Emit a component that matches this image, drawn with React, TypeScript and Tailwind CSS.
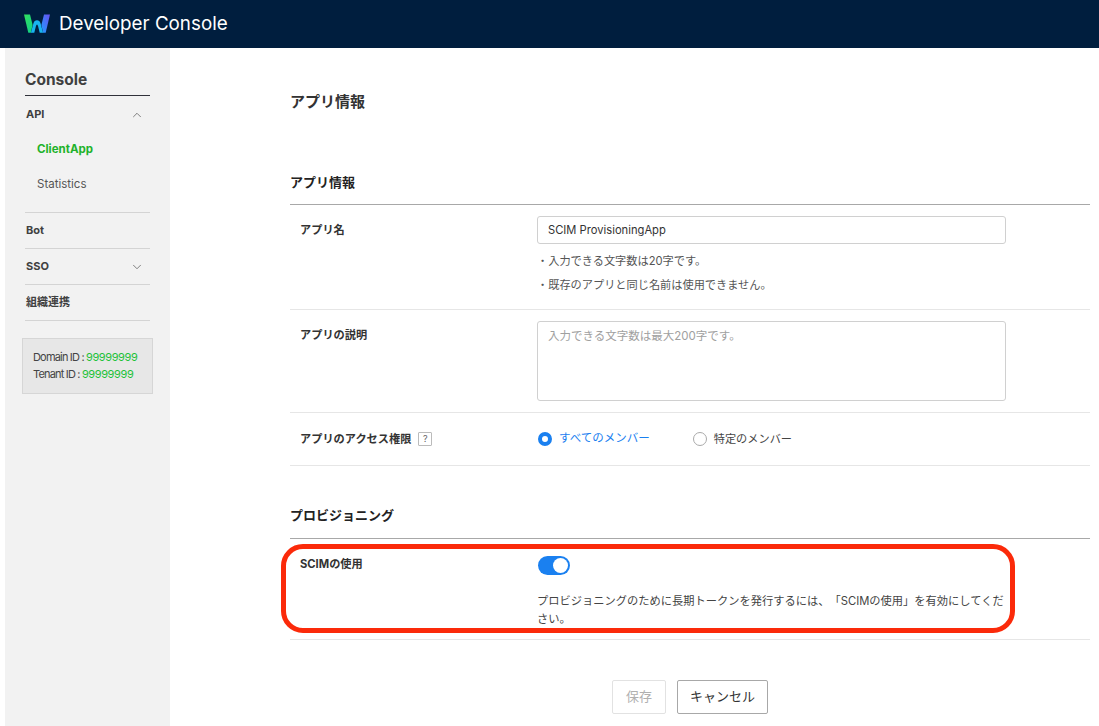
import { ChevronDown, ChevronUp } from 'lucide-react';

const fontStack = "font-['Inter','Noto_Sans_CJK_JP',sans-serif]";

function Logo() {
  return (
    <svg width="26" height="20" viewBox="0 0 26 20" aria-hidden="true">
      <defs>
        <linearGradient id="wLeft" x1="0" y1="0" x2="1" y2="1">
          <stop offset="0" stopColor="#34e05c" />
          <stop offset="1" stopColor="#0fcf8a" />
        </linearGradient>
        <linearGradient id="wRight" x1="0" y1="1" x2="1" y2="0">
          <stop offset="0" stopColor="#1e9cff" />
          <stop offset="1" stopColor="#6a4ff0" />
        </linearGradient>
      </defs>
      <path d="M0 .5h6l2.6 10.5-1.7 7.8H4.3z" fill="url(#wLeft)" />
      <path d="M6.9 18.8 9.4 9.5Q10.4 6.2 13 6.2t3.6 3.3l2.5 9.3h-3.4l-1.6-6.6Q13.6 10.6 13 10.6t-1.1 1.6l-1.6 6.6z" fill="#18b4f0" />
      <path d="M19.1 18.8h2.6L26 .5h-6l-2.6 10.5z" fill="url(#wRight)" />
    </svg>
  );
}

function NavRow({ label, open }: { label: string; open?: boolean }) {
  return (
    <div className="flex h-[35px] items-center justify-between pl-px pr-[6px] text-[11px] font-bold text-[#404040]">
      <span>{label}</span>
      {open === true && <ChevronUp className="size-3.5 text-[#555]" strokeWidth={1.25} />}
      {open === false && <ChevronDown className="size-3.5 text-[#555]" strokeWidth={1.25} />}
    </div>
  );
}

function Sidebar() {
  return (
    <aside className="ml-[5px] w-[165px] shrink-0 bg-[#f2f2f2] pt-[19px]">
      <div className="mx-5 w-[125px]">
        <div className="h-[29px] border-b border-[#30323a] text-[15.5px] leading-[26px] font-bold text-[#404040]">Console</div>
        <div className="pt-px">
          <NavRow label="API" open />
        </div>
        <div className="mt-px flex h-[34px] items-center pl-3 text-[11.5px] font-bold text-[#1fb22b]">ClientApp</div>
        <div className="flex h-9 items-center pl-3 text-[11.5px] text-[#555]">Statistics</div>
        <div className="mt-[9px] border-t border-[#d4d4d4]">
          <NavRow label="Bot" />
        </div>
        <div className="border-t border-[#d4d4d4]">
          <NavRow label="SSO" open={false} />
        </div>
        <div className="border-t border-[#d4d4d4]">
          <NavRow label="組織連携" />
        </div>
        <div className="border-t border-[#d4d4d4]" />
      </div>
      <div className="mt-[17px] ml-[17px] h-[56px] w-[131px] border border-[#d6d6d6] bg-[#e7e7e7] px-[10px] py-[10px] text-[11px] leading-[17px] tracking-[-0.82px] whitespace-nowrap text-[#444]">
        <div>
          Domain ID : <span className="tracking-[-0.4px] text-[#1fc23a]">99999999</span>
        </div>
        <div>
          Tenant ID : <span className="tracking-[-0.4px] text-[#1fc23a]">99999999</span>
        </div>
      </div>
    </aside>
  );
}

function Label({ children }: { children: React.ReactNode }) {
  return <div className="w-[247px] shrink-0 pl-[10px] text-[11.2px] font-bold text-[#333]">{children}</div>;
}

function Radio({ checked, label }: { checked?: boolean; label: string }) {
  return (
    <label className="flex items-center gap-[7px]">
      {checked ? (
        <span className="size-[14px] rounded-full border-[4px] border-[#1a80f0] bg-white" />
      ) : (
        <span className="size-[14px] rounded-full border border-[#aaa] bg-white" />
      )}
      <span className={checked ? 'text-[11.5px] text-[#1a80f0]' : 'text-[11.2px] text-[#444]'}>{label}</span>
    </label>
  );
}

function Main() {
  return (
    <main className="ml-[120px] w-[800px] shrink-0">
      <h1 className="pt-[44px] text-[15px] leading-[20px] font-bold text-[#333]">アプリ情報</h1>

      <h2 className="mt-[60px] h-[33px] border-b border-[#a8a8a8] text-[13px] leading-[20px] font-bold text-[#222]">アプリ情報</h2>
      <div className="flex h-[105px] border-b border-[#e6e6e6] pt-[11px]">
        <div className="pt-[6px]">
          <Label>アプリ名</Label>
        </div>
        <div>
          <div className="flex h-7 w-[469px] items-center rounded-[3px] border border-[#d0d0d0] px-[10px] text-[11.2px] text-[#333]">
            SCIM ProvisioningApp
          </div>
          <p className="mt-[9px] text-[11.2px] leading-[16px] text-[#555]">・入力できる文字数は20字です。</p>
          <p className="mt-2 text-[11.2px] leading-[16px] text-[#555]">・既存のアプリと同じ名前は使用できません。</p>
        </div>
      </div>
      <div className="flex h-[103px] border-b border-[#e6e6e6] pt-[11px]">
        <div className="pt-[6px]">
          <Label>アプリの説明</Label>
        </div>
        <div className="h-[80px] w-[469px] rounded-[3px] border border-[#d0d0d0] px-[10px] py-[6px] text-[11.5px] leading-[16px] text-[#a0a0a0]">
          入力できる文字数は最大200字です。
        </div>
      </div>
      <div className="flex h-[53px] items-center border-b border-[#e6e6e6]">
        <Label>
          <span className="flex items-center gap-[7px]">
            アプリのアクセス権限
            <span className="flex size-[14px] items-center justify-center rounded-[1px] border border-[#bbb] text-[9px] font-normal text-[#666]">?</span>
          </span>
        </Label>
        <div className="ml-px flex gap-[43px]">
          <Radio checked label="すべてのメンバー" />
          <Radio label="特定のメンバー" />
        </div>
      </div>

      <h2 className="mt-[40px] h-[33px] border-b border-[#a8a8a8] text-[13px] leading-[18px] font-bold text-[#222]">プロビジョニング</h2>
      <div className="flex h-[101px] border-b border-[#e6e6e6] pt-[17px]">
        <Label>SCIMの使用</Label>
        <div className="w-[469px]">
          <div className="ml-px flex h-[19px] w-8 items-center justify-end rounded-full bg-[#1a80f0] pr-[2px]">
            <span className="size-[15px] rounded-full bg-white" />
          </div>
          <p className="mt-[17px] text-[11.25px] leading-[18px] text-[#444] [text-spacing-trim:space-all]">
            プロビジョニングのために長期トークンを発行するには、「SCIMの使用」を有効にしてください。
          </p>
        </div>
      </div>

      <div className="mt-10 flex justify-center gap-[11px]">
        <button className="h-[34px] w-[54px] rounded-[2px] border border-[#e2e2e2] text-[13px] text-[#b0b0b0]">保存</button>
        <button className="h-[34px] w-[91px] rounded-[2px] border border-[#a8a8a8] text-[13px] text-[#333]">キャンセル</button>
      </div>
    </main>
  );
}

export default function App() {
  return (
    <div className={`relative h-[726px] w-[1099px] overflow-hidden bg-white ${fontStack}`}>
      <header className="flex h-12 items-center gap-[9px] bg-[#001e3e] pl-6">
        <Logo />
        <span className="pt-px text-[18.8px] text-white">Developer Console</span>
      </header>
      <div className="flex h-[678px]">
        <Sidebar />
        <Main />
      </div>
      {/* red annotation drawn over the screenshot */}
      <div className="pointer-events-none absolute top-[544px] left-[281px] h-[89px] w-[734px] rounded-[22px] border-[5px] border-[#fb2a0a]" />
    </div>
  );
}
